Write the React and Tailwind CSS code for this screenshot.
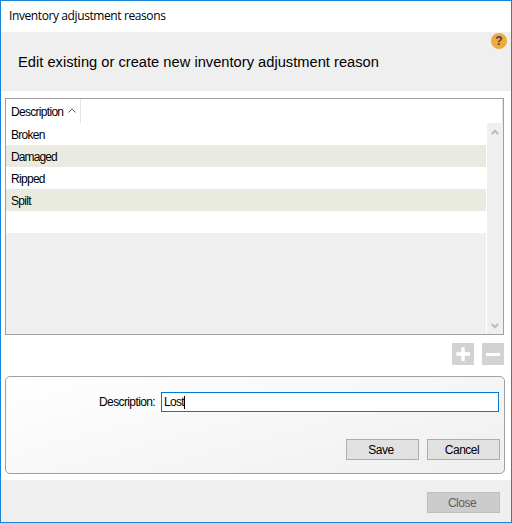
const reasons = ["Broken", "Damaged", "Ripped", "Spilt", ""];

function Button({ children, disabled = false }) {
  return (
    <button
      type="button"
      disabled={disabled}
      className={`flex h-[21px] w-[73px] items-center justify-center border pr-[3px] tracking-[-0.5px] ${
        disabled
          ? "border-[#bfbfbf] bg-[#cccccc] text-[#606060]"
          : "border-[#adadad] bg-[#e1e1e1] text-black"
      }`}
    >
      {children}
    </button>
  );
}

function IconButton({ label, children }) {
  return (
    <button type="button" aria-label={label} className="size-[22px] bg-[#d2d2d2]">
      <svg viewBox="0 0 22 22" className="block size-[22px]" fill="white">
        {children}
      </svg>
    </button>
  );
}

function ScrollArrow({ d }) {
  return (
    <svg viewBox="0 0 8 6" className="h-[6px] w-[8px]" fill="none" stroke="#bcbcbc" strokeWidth="2.2">
      <path d={d} />
    </svg>
  );
}

export default function App() {
  return (
    <div className="flex h-[523px] w-[512px] flex-col border border-[#1b83d8] bg-white font-['Liberation_Sans',Arial,sans-serif] text-[12px] leading-[14px] tracking-[-0.7px] text-black">
      <div className="h-[31px] pt-[7px] pl-[8px] font-['Open_Sans','Noto_Sans',sans-serif] text-[12px] leading-[16px] tracking-[-0.4px]">
        Inventory adjustment reasons
      </div>

      <header className="flex h-[59px] justify-between bg-[#efefef] pt-[1px] pr-[4px] pl-[17px]">
        <h1 className="pt-[19px] text-[14.67px] leading-[20px] tracking-[0.015px]">
          Edit existing or create new inventory adjustment reason
        </h1>
        <div className="flex size-[16px] items-center justify-center rounded-full bg-[#f0a93c] text-[12px] font-bold tracking-normal text-[#3d4347]">
          ?
        </div>
      </header>

      <div className="mt-[7px] ml-[4px] flex h-[237px] w-[499px] flex-col border border-[#a0a0a0]">
        <div className="flex h-[24px] shrink-0 border-r border-[#e3e3e3]">
          <div className="flex w-[75px] items-center border-r border-[#e3e3e3] pt-[2px] pl-[5px]">
            <span className="w-[57px]">Description</span>
            <svg viewBox="0 0 8 5" className="mb-[3px] h-[5px] w-[8px]" fill="none" stroke="#5a5a5a" strokeWidth="1">
              <path d="M.5 4.500 4 1l3.500 3.500" />
            </svg>
          </div>
        </div>
        <div className="flex flex-1 bg-[#efefef]">
          <div className="flex-1">
            {reasons.map((reason, i) => (
              <div
                key={i}
                className={`h-[22px] pt-[5px] pl-[5px] ${
                  reason === "Damaged" ? "tracking-[-0.9px]" : "tracking-[-0.7px]"
                } ${i % 2 ? "bg-[#eaebe0]" : "bg-white"}`}
              >
                {reason}
              </div>
            ))}
          </div>
          <div className="flex w-[17px] flex-col items-center justify-between border-l border-white pt-[6px] pr-[1px] pb-[5px]">
            <ScrollArrow d="M.7 5 4 1.700 7.300 5" />
            <ScrollArrow d="M.7 1 4 4.300 7.300 1" />
          </div>
        </div>
      </div>

      <div className="mt-[8px] mr-[7px] flex justify-end gap-2">
        <IconButton label="Add">
          <path d="M4.300 9.300h13.700v3.400H4.300zM9.300 4.300h3.400v13.700H9.300z" />
        </IconButton>
        <IconButton label="Remove">
          <path d="M4 10h14v3H4z" />
        </IconButton>
      </div>

      <section className="mt-[11px] ml-[4px] h-[98px] w-[500px] rounded-[5px] border border-[#a0a0a0] bg-linear-[165deg,#ffffff,#efefef] pt-[15px] pr-[4px]">
        <div className="flex h-[20px] items-center justify-end pr-[1px]">
          <label htmlFor="description" className="mr-[6px] tracking-[-0.62px]">
            Description:
          </label>
          <div id="description" className="flex h-[20px] w-[338px] items-center border border-[#0078d7] bg-white pl-[2px]">
            <span>Lost</span>
            <span className="h-[13px] w-px bg-black" />
          </div>
        </div>
        <div className="mt-[27px] flex justify-end gap-2">
          <Button>Save</Button>
          <Button>Cancel</Button>
        </div>
      </section>

      <footer className="mt-[6px] flex flex-1 justify-end bg-[#efefef] pt-[12px] pr-[11px]">
        <Button disabled>Close</Button>
      </footer>
    </div>
  );
}
